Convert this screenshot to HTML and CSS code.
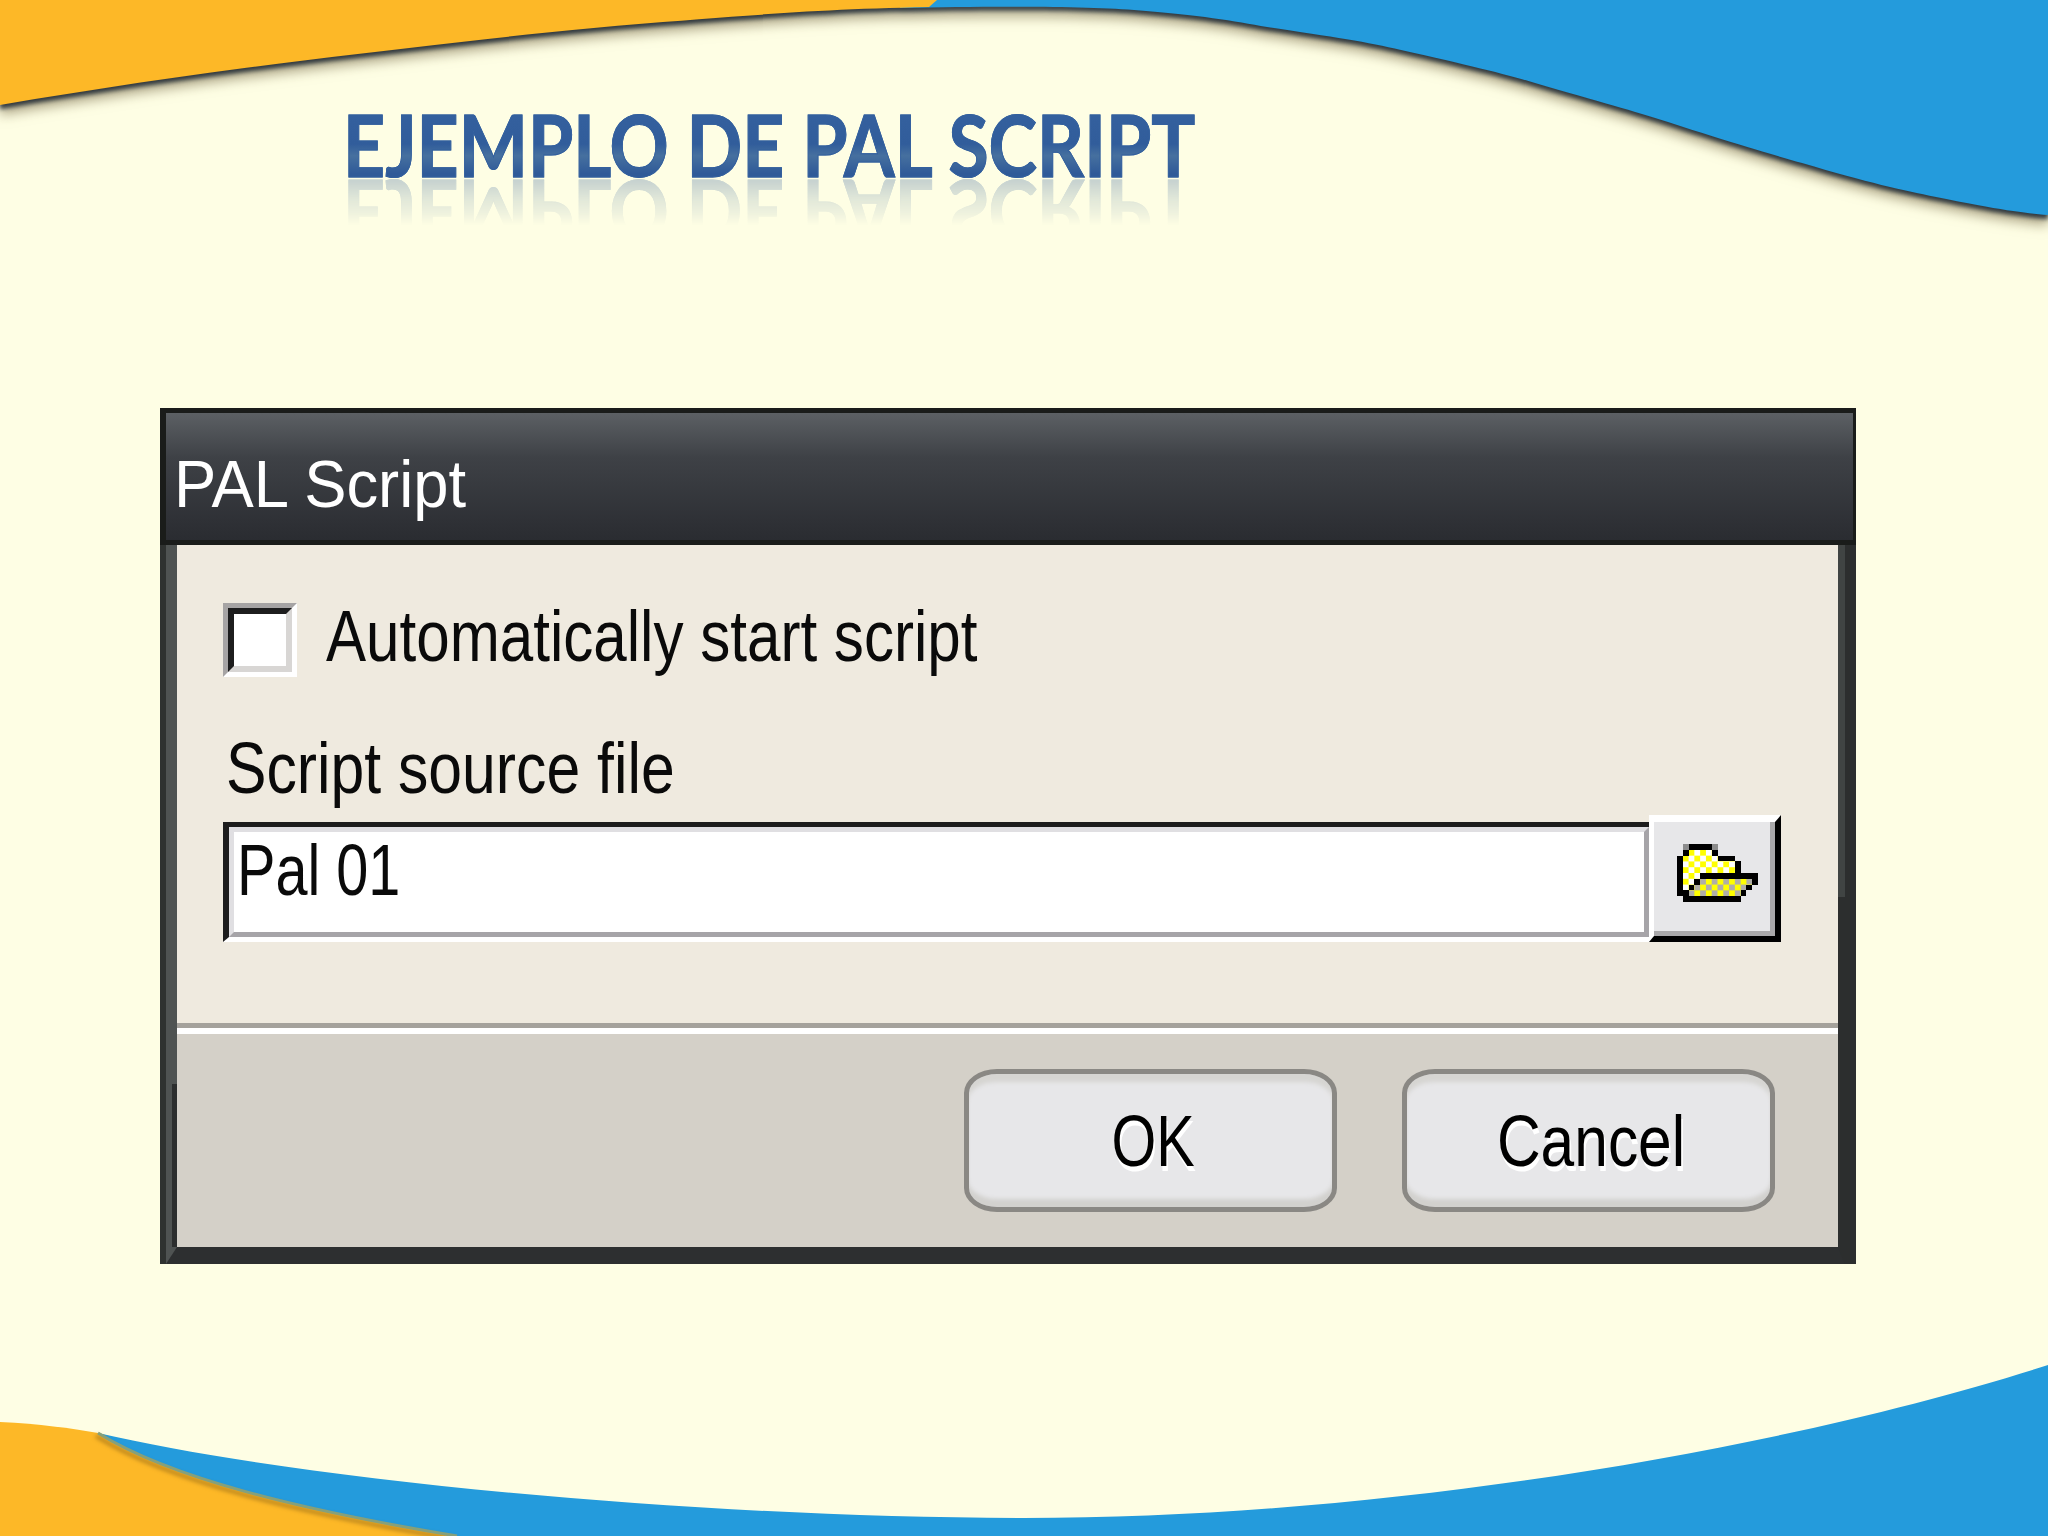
FILE: index.html
```html
<!DOCTYPE html>
<html>
<head>
    <title>Ejemplo de PAL Script</title>
    <link rel="stylesheet" href="styles.css">
</head>
<body>
    <div class="slide">
        <svg class="waves" viewBox="0 0 2048 1536" width="2048" height="1536">
            <g class="top-wave">
                <path fill="#249bdc" d="M900 0 V8 C1000 6 1084 6.500 1134 10 C1200 15 1234 21 1267 27 C1334 37 1368 42 1401 50 C1468 65 1501 73 1535 83 C1600 102 1634 111 1668 122 C1735 144 1768 153 1802 163 C1869 183 1902 190 1936 197 C2000 210 2024 213 2048 215 V0 Z"/>
                <path fill="#fdb827" d="M0 0 V105 C110 86 220 70.500 332 57 C445 43.500 553 30.600 663 22 C773 13.400 829 9 929 7 L937 0 Z"/>
            </g>
            <path fill="#fdb827" d="M0 1422 C40 1424 70 1428 98 1433 L480 1536 H0 Z"/>
            <path class="blue-band" fill="#249bdc" d="M98 1433 C300 1480 700 1518 1024 1518 C1400 1518 1800 1445 2048 1365 V1536 H457 C300 1510 170 1478 98 1433 Z"/>
            <path class="band-edge" fill="none" d="M98 1433 C170 1478 300 1510 457 1536"/>
        </svg>

        <h1 class="slide-title">EJEMPLO DE PAL SCRIPT</h1>

        <div class="dialog">
            <div class="titlebar"><span class="titlebar-text">PAL Script</span></div>
            <div class="frame">
                <div class="frame-inner">
                    <div class="form-area">
                        <label class="check-row">
                            <span class="checkbox"><span class="checkbox-inner"></span></span>
                            <span class="check-text">Automatically start script</span>
                        </label>
                        <div class="field-label"><span>Script source file</span></div>
                        <div class="field-row">
                            <div class="text-input"><div class="text-input-inner"><span>Pal 01</span></div></div>
                            <button type="button" class="browse-btn">
                                <span class="browse-inner">
                                    <svg class="folder" viewBox="0 0 14 10" width="81" height="58" shape-rendering="crispEdges">
                                        <defs>
                                            <pattern id="backChecks" width="2" height="2" patternUnits="userSpaceOnUse">
                                                <rect width="2" height="2" fill="#ffff00"/>
                                                <rect width="1" height="1" fill="#ffffff"/>
                                                <rect x="1" y="1" width="1" height="1" fill="#ffffff"/>
                                            </pattern>
                                            <pattern id="frontChecks" width="2" height="2" patternUnits="userSpaceOnUse">
                                                <rect width="2" height="2" fill="#ffff00"/>
                                                <rect width="1" height="1" fill="#b0aea8"/>
                                                <rect x="1" y="1" width="1" height="1" fill="#b0aea8"/>
                                            </pattern>
                                        </defs>
                                        <path fill="url(#backChecks)" d="M2 1 H6 V2 H9 V3 H10 V5 H4 V6 H3 V7 H2 V8 H1 V2 H2 Z"/>
                                        <path fill="url(#frontChecks)" d="M4 6 H13 V7 H12 V8 H11 V9 H2 V8 H3 V7 H4 Z"/>
                                        <path fill="#000000" d="M2 0 H6 V1 H2 Z M1 1 H2 V2 H1 Z M6 1 H7 V2 H6 Z M0 2 H1 V9 H0 Z M7 2 H10 V3 H7 Z M10 3 H11 V5 H10 Z M4 5 H14 V6 H4 Z M3 6 H4 V7 H3 Z M13 6 H14 V7 H13 Z M2 7 H3 V8 H2 Z M12 7 H13 V8 H12 Z M1 8 H2 V9 H1 Z M11 8 H12 V9 H11 Z M1 9 H11 V10 H1 Z"/>
                                        <path fill="#8c8c8c" d="M1 0 H2 V1 H1 Z M6 0 H7 V1 H6 Z"/>
                                    </svg>
                                </span>
                            </button>
                        </div>
                    </div>
                    <div class="footer">
                        <button type="button" class="action-btn ok-btn"><span>OK</span></button>
                        <button type="button" class="action-btn cancel-btn"><span>Cancel</span></button>
                    </div>
                </div>
            </div>
        </div>
    </div>
</body>
</html>
```

FILE: styles.css
```css
body {
    margin: 0;
    background: #fefee4;
    font-family: "Liberation Sans", Arial, sans-serif;
}

.slide {
    position: relative;
    width: 2048px;
    height: 1536px;
    overflow: hidden;
    box-sizing: border-box;
    padding-top: 102px;
}

.waves {
    position: absolute;
    left: 0;
    top: 0;
}

.top-wave {
    filter: drop-shadow(0 4px 2px rgba(35, 45, 55, 0.9)) drop-shadow(0 6px 6px rgba(100, 85, 50, 0.55));
}

.band-edge {
    stroke: #86a07a;
    stroke-width: 3;
    filter: drop-shadow(-2px 3px 2px rgba(130, 90, 20, 0.7));
}

.slide-title {
    position: relative;
    margin: 0 0 0 343px;
    width: max-content;
    font-family: Lato, "Open Sans", sans-serif;
    font-size: 86px;
    font-weight: 700;
    line-height: 84px;
    white-space: nowrap;
    transform: scaleX(0.852);
    transform-origin: left;
    background: linear-gradient(#35619f, #315d9b 50%, #46709f 64%, #2f5a98 85%);
    -webkit-background-clip: text;
    background-clip: text;
    color: transparent;
    -webkit-text-stroke: 1px #33609e;
    -webkit-box-reflect: below -15px linear-gradient(transparent 35%, rgba(0, 0, 0, 0.32));
}

.dialog {
    position: relative;
    width: 1696px;
    margin: 222px 0 0 160px;
}

.titlebar {
    box-sizing: border-box;
    height: 137px;
    padding: 34px 0 0 8px;
    border: solid #1a1c1a;
    border-width: 5px 3px 5px 6px;
    background: linear-gradient(#5c6064, #3e4146 35%, #2a2c31);
    color: #fff;
    font-size: 67px;
    line-height: 74px;
}

.titlebar-text {
    display: inline-block;
    transform: scaleX(0.945);
    transform-origin: left;
}

.frame {
    border-left: 6px solid #2f3230;
    border-right: 11px solid #2c2e2e;
}

.frame-inner {
    border-left: 11px solid #4f5352;
    border-right: 7px solid #2c2e2e;
    border-bottom: 17px solid #2d2f30;
}

.form-area {
    position: relative;
    box-sizing: border-box;
    height: 478px;
    padding: 58px 57px 0 46px;
    background: #efeadf;
    font-size: 72px;
    color: #0a0a0a;
}

.form-area::after {
    content: "";
    position: absolute;
    right: -7px;
    top: 0;
    width: 7px;
    height: 352px;
    background: #404443;
}

.check-row {
    display: flex;
    align-items: center;
    gap: 29px;
    height: 74px;
}

.checkbox {
    display: block;
    flex: none;
    box-sizing: border-box;
    width: 74px;
    height: 74px;
    border: 5px solid;
    border-color: #a6a4a4 #fff #fff #a6a4a4;
}

.checkbox-inner {
    display: block;
    box-sizing: border-box;
    height: 100%;
    background: #fff;
    border: 6px solid;
    border-color: #1d1d1d #d8d6d4 #d8d6d4 #1d1d1d;
}

.check-text {
    margin-top: -9px;
    line-height: 74px;
    white-space: nowrap;
    transform: scaleX(0.835);
    transform-origin: left;
}

.field-label {
    margin: 54px 0 0 3px;
    line-height: 74px;
}

.field-label span {
    display: inline-block;
    transform: scaleX(0.843);
    transform-origin: left;
}

.field-row {
    display: flex;
    align-items: flex-end;
    margin-top: 10px;
}

.text-input {
    flex: 1;
    box-sizing: border-box;
    height: 120px;
    border: solid;
    border-width: 5px 0 5px 6px;
    border-color: #1d1d1d #fff #fff #1d1d1d;
}

.text-input-inner {
    box-sizing: border-box;
    height: 100%;
    padding: 0 0 0 3px;
    background: #fff;
    border: 5px solid;
    border-color: #e0dfe2 #a6a4a8 #a6a4a8 #e0dfe2;
    line-height: 76px;
}

.text-input-inner span {
    display: inline-block;
    transform: scaleX(0.8);
    transform-origin: left;
}

.browse-btn {
    box-sizing: border-box;
    width: 132px;
    height: 127px;
    padding: 0;
    margin: 0;
    background: #e7e7e9;
    border: solid;
    border-width: 7px 6px 6px 5px;
    border-color: #fff #000 #000 #fff;
}

.browse-inner {
    display: flex;
    align-items: center;
    justify-content: center;
    box-sizing: border-box;
    height: 100%;
    padding: 0 0 7px 11px;
    border-right: 5px solid #a9a8aa;
    border-bottom: 5px solid #a9a8aa;
}

.footer {
    position: relative;
    display: flex;
    justify-content: flex-end;
    gap: 65px;
    padding: 35px 63px 35px 0;
    background: #d4d0c8;
    border-top: 5px solid #a5a29c;
    box-shadow: inset 0 6px 0 #fff;
}

.footer::before {
    content: "";
    position: absolute;
    left: -5px;
    top: 56px;
    bottom: 0;
    width: 5px;
    background: #2c2e2e;
}

.action-btn {
    box-sizing: border-box;
    width: 373px;
    height: 143px;
    padding: 0 0 0 6px;
    margin-top: 6px;
    background: #e7e7e9;
    border: 5px solid #8a8884;
    border-radius: 33px / 24px;
    box-shadow: inset 0 10px 4px -2px #d6d5d2, inset 0 -10px 4px -2px #d2d1ce;
    font-family: inherit;
    font-size: 72px;
    line-height: 74px;
    color: #000;
    text-shadow: 2px 5px 0 #fff;
}

.action-btn span {
    display: inline-block;
}

.ok-btn span {
    transform: scaleX(0.8);
}

.cancel-btn span {
    transform: scaleX(0.84);
}
```
